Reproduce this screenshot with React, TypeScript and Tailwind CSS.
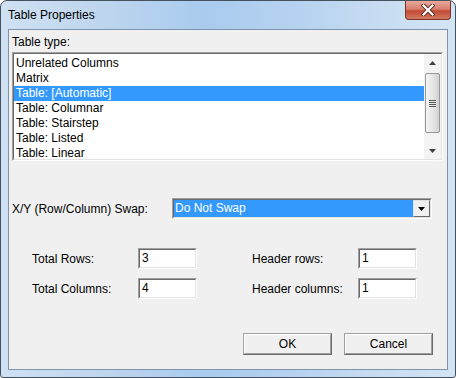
import React from 'react';

const tableTypes = [
  'Unrelated Columns',
  'Matrix',
  'Table: [Automatic]',
  'Table: Columnar',
  'Table: Stairstep',
  'Table: Listed',
  'Table: Linear',
];

// Classic 3D sunken edge (two borders deep)
const Sunken: React.FC<{ className?: string; children?: React.ReactNode }> = ({ className = '', children }) => (
  <div className={`border border-t-[#a0a0a0] border-l-[#a0a0a0] border-r-white border-b-white ${className}`}>
    <div className="h-full w-full overflow-hidden border border-t-[#696969] border-l-[#696969] border-r-[#e3e3e3] border-b-[#e3e3e3] bg-white">
      {children}
    </div>
  </div>
);

const Arrow: React.FC<{ down?: boolean; color?: string }> = ({ down = false, color = '#000' }) => (
  <svg width="7" height="4" viewBox="0 0 7 4">
    <path d={down ? 'M0 0H7L3.5 4Z' : 'M0 4H7L3.5 0Z'} fill={color} />
  </svg>
);

const Field: React.FC<{ value: string }> = ({ value }) => (
  <Sunken className="h-[21px] w-[59px]">
    <div className="pl-[2px] leading-[17px]">{value}</div>
  </Sunken>
);

const PushButton: React.FC<{ label: string }> = ({ label }) => (
  <div className="h-[22px] w-[89px] border border-t-[#a0a0a0] border-l-[#a0a0a0] border-r-[#696969] border-b-[#696969]">
    <div className="flex h-full items-center justify-center border border-t-white border-l-white border-r-[#a0a0a0] border-b-[#a0a0a0] bg-[#f0f0f0]">
      {label}
    </div>
  </div>
);

export default function App() {
  return (
    <div className="h-[378px] w-[456px] bg-white font-['Liberation_Sans',Arial,sans-serif] text-[12px] text-black">
      <div className="flex h-full flex-col rounded-t-[7px] rounded-b-[3px] border border-[#44525f] bg-[linear-gradient(90deg,#cfe1f3,#bcd4ee_25%,#a9cbef_45%,#b6d2f0_65%,#c9ddf2_85%,#d3e4f4)]">
        {/* Title bar */}
        <div className="flex h-[28px] shrink-0 items-start justify-between">
          <div className="pl-[7px] pt-[7px] leading-[15px]">Table Properties</div>
          <div className="mr-[4px] flex h-[19px] w-[46px] items-center justify-center rounded-b-[4px] border border-t-0 border-[#7c3328] bg-[linear-gradient(180deg,#e9a99a,#d88070_45%,#c24a35_55%,#d27a60)]">
            <svg width="14" height="12" viewBox="0 0 14 12">
              <path d="M2.5 1.5L11.5 10.5M11.5 1.5L2.5 10.5" stroke="#5a2a22" strokeWidth="4" strokeLinecap="square" />
              <path d="M2.5 1.5L11.5 10.5M11.5 1.5L2.5 10.5" stroke="#fff" strokeWidth="2.2" strokeLinecap="square" />
            </svg>
          </div>
        </div>

        {/* Client area */}
        <div className="mx-[7px] flex flex-1 flex-col border border-[#7f93aa] bg-[#f0f0f0]">
          <div className="h-[22px] pl-[3px] pt-[5px] leading-[15px]">Table type:</div>

          {/* List box */}
          <Sunken className="ml-[3px] h-[109px] w-[431px]">
            <div className="flex h-full">
              <div className="flex-1 pt-[2px]">
                {tableTypes.map((t, i) => (
                  <div
                    key={t}
                    className={`h-[15px] pl-[2px] leading-[15px] ${i === 2 ? 'bg-[#3399ff] text-white' : ''}`}
                  >
                    {t}
                  </div>
                ))}
              </div>
              {/* Scrollbar */}
              <div className="flex w-[17px] flex-col items-center bg-[#f3f3f3]">
                <div className="flex h-[17px] items-center justify-center">
                  <Arrow color="#404040" />
                </div>
                <div className="mt-[2px] flex h-[60px] w-[15px] flex-col items-center justify-center gap-[1px] rounded-[2px] border border-[#979797] bg-[linear-gradient(90deg,#f4f4f4,#e6e6e6_50%,#d2d2d2)]">
                  <div className="h-[1px] w-[7px] bg-[#5a5a5a]" />
                  <div className="h-[1px] w-[7px] bg-[#5a5a5a]" />
                  <div className="h-[1px] w-[7px] bg-[#5a5a5a]" />
                  <div className="h-[1px] w-[7px] bg-[#5a5a5a]" />
                </div>
                <div className="flex-1" />
                <div className="flex h-[17px] items-center justify-center">
                  <Arrow down color="#404040" />
                </div>
              </div>
            </div>
          </Sunken>

          {/* Swap combo */}
          <div className="mt-[37px] flex h-[21px] items-center">
            <div className="w-[163px] pl-[3px]">X/Y (Row/Column) Swap:</div>
            <Sunken className="h-[21px] w-[260px]">
              <div className="flex h-full">
                <div className="flex-1 bg-[#3399ff] pl-[1px] leading-[17px] text-white">Do Not Swap</div>
                <div className="flex w-[17px] items-center justify-center border border-t-[#e3e3e3] border-l-[#e3e3e3] border-r-[#696969] border-b-[#696969] bg-[#f0f0f0]">
                  <Arrow down />
                </div>
              </div>
            </Sunken>
          </div>

          {/* Counts */}
          <div className="mt-[29px] grid grid-cols-[129px_59px_55px_106px_59px] items-center gap-y-[9px]">
            <div className="pl-[23px]">Total Rows:</div>
            <Field value="3" />
            <div />
            <div>Header rows:</div>
            <Field value="1" />
            <div className="pl-[23px]">Total Columns:</div>
            <Field value="4" />
            <div />
            <div>Header columns:</div>
            <Field value="1" />
          </div>

          {/* Buttons */}
          <div className="mt-[34px] flex justify-end gap-[12px] pr-[14px]">
            <PushButton label="OK" />
            <PushButton label="Cancel" />
          </div>
        </div>

        {/* Bottom frame */}
        <div className="h-[7px] shrink-0" />
      </div>
    </div>
  );
}
